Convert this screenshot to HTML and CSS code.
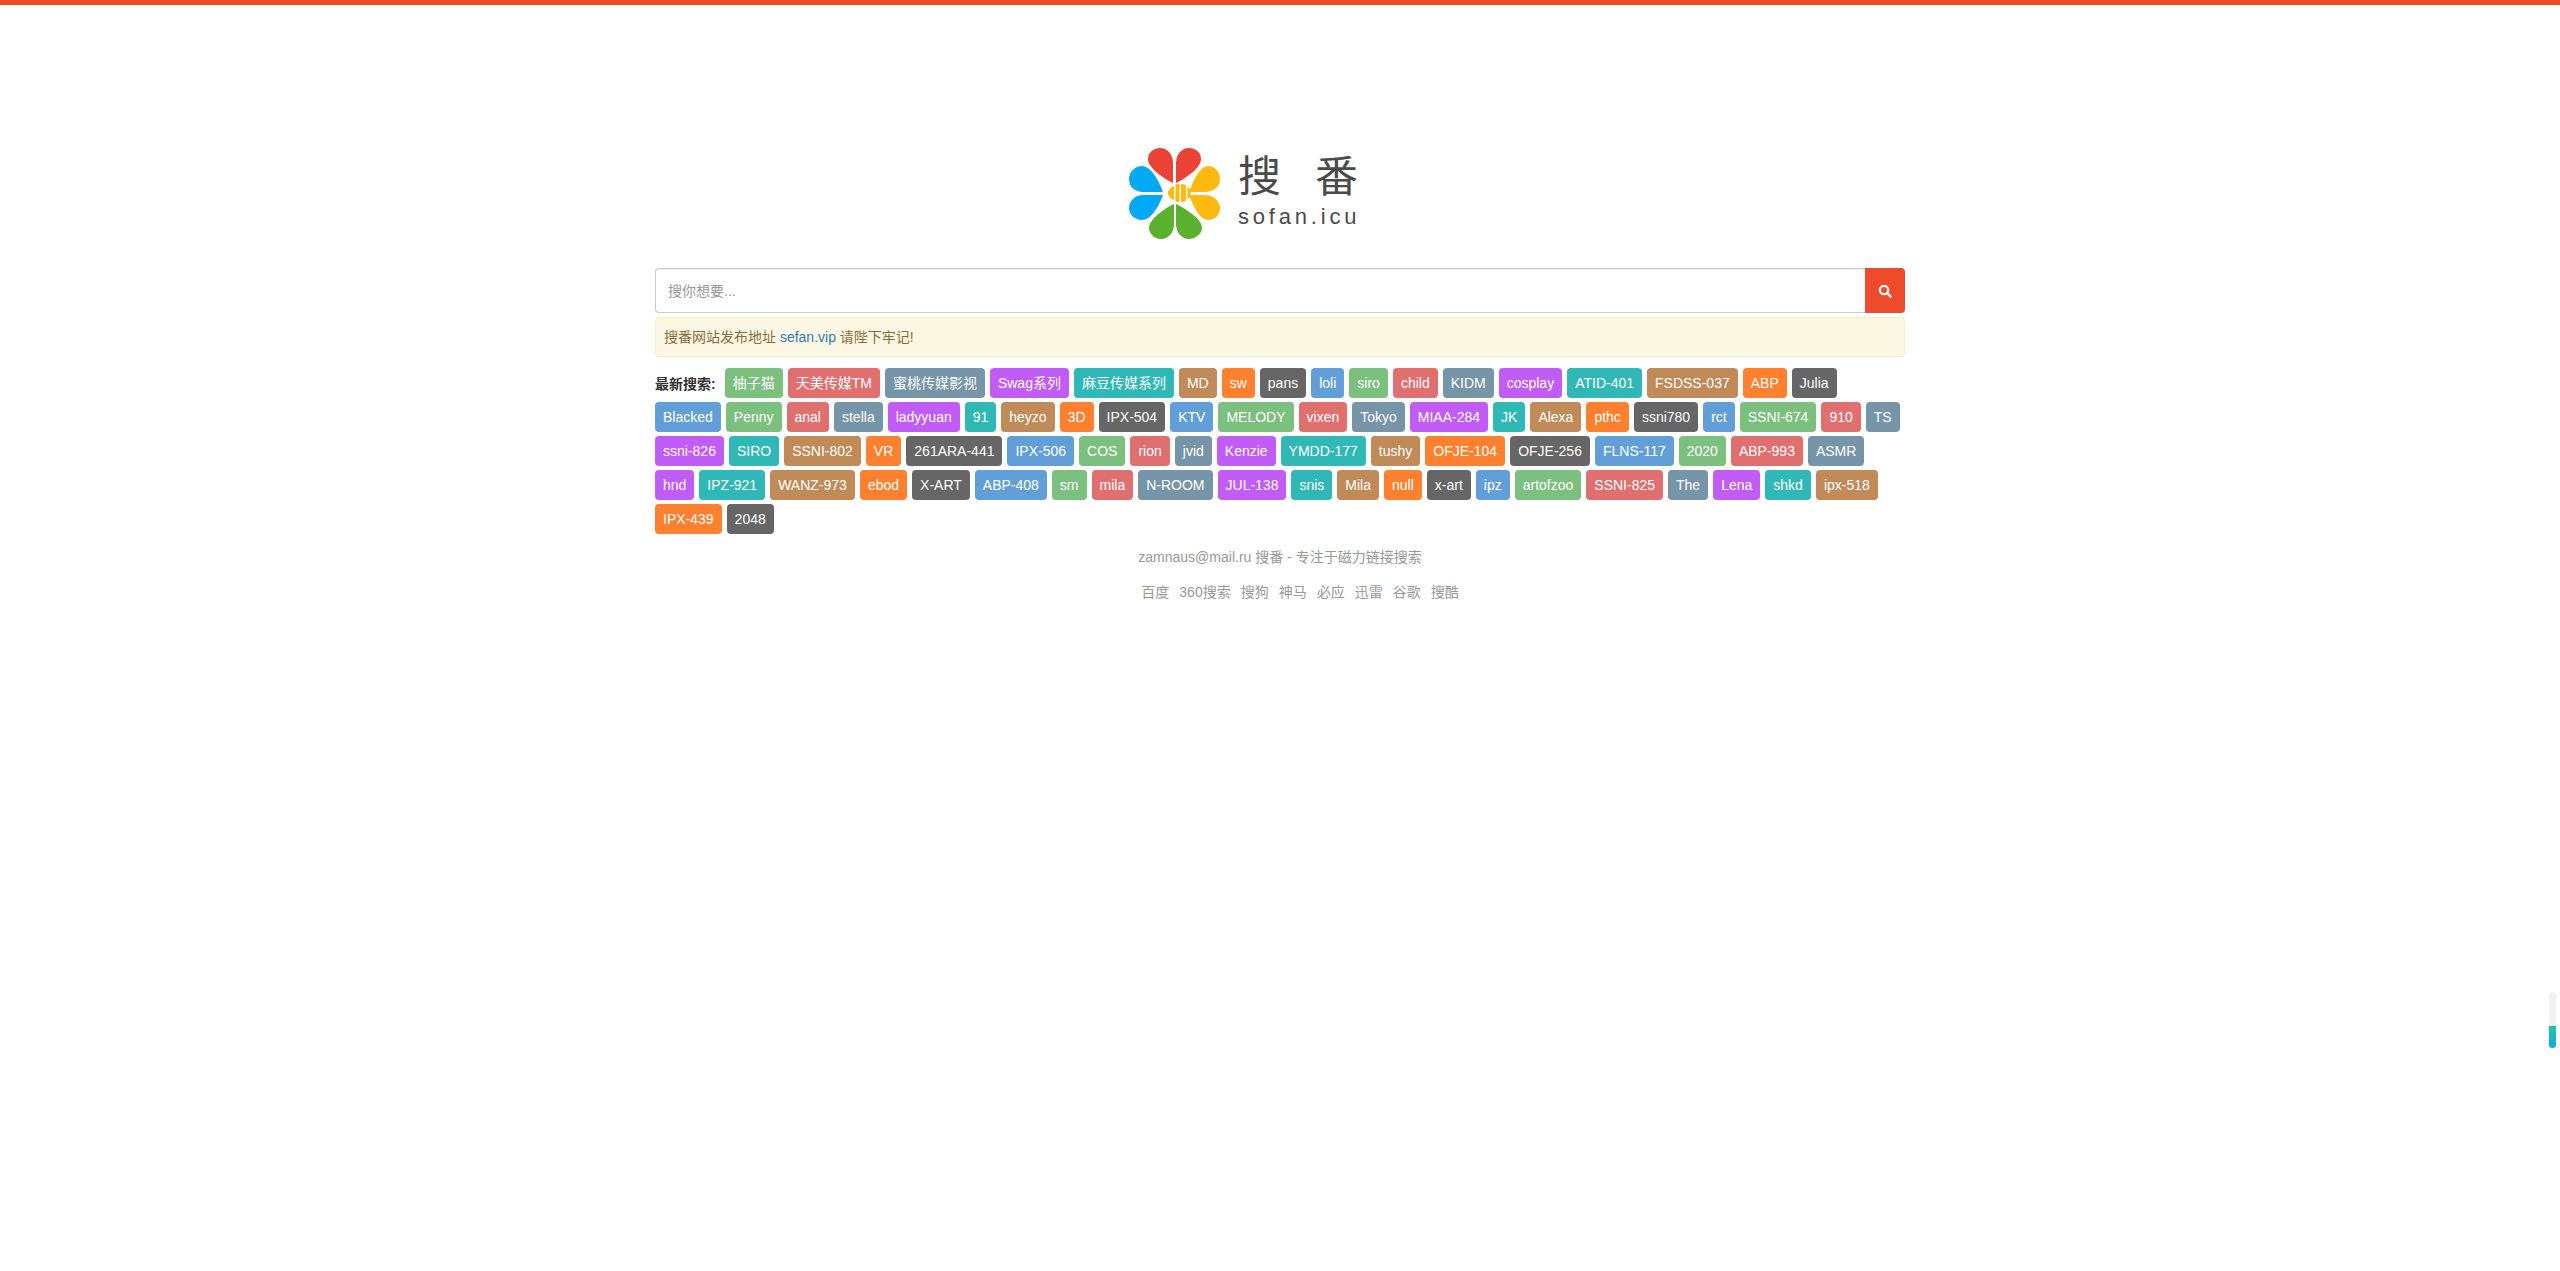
FILE: index.html
```html
<!DOCTYPE html>
<html lang="zh-CN">
<head>
  <meta charset="UTF-8">
  <title>搜番</title>
  <link rel="stylesheet" href="styles.css">
</head>
<body>
  <div class="top-bar"></div>
  <div class="container">
    <div class="logo">
      <svg class="logo-mark" width="92" height="92" viewBox="0 0 92 92">
        <path fill="#ea4335" d="M44 35 C34 30 19 20 19 11 C19 4 25 0 31 0 C39 0 44 7 44 15 Z"/>
        <path fill="#ea4335" d="M47 35 L47 15 C47 7 52 0 60 0 C66 0 72 4 72 11 C72 20 57 30 47 35 Z"/>
        <path fill="#03a9f4" d="M34 44 L14 44 C6 44 0 39 0 31 C0 24 6 18 13 18 C22 18 30 33 34 44 Z"/>
        <path fill="#03a9f4" d="M34 47 L14 47 C6 47 0 53 0 60 C0 67 6 72 13 72 C22 72 30 58 34 47 Z"/>
        <path fill="#ffb90f" d="M60 44 C64 33 71 18 79 18 C86 18 91 24 91 31 C91 39 84 44 76 44 Z"/>
        <path fill="#ffb90f" d="M60 47 L76 47 C84 47 91 53 91 60 C91 67 86 72 79 72 C71 72 64 58 60 47 Z"/>
        <path fill="#5bb12f" d="M45 56 L45 76 C45 84 40 91 32 91 C26 91 20 86 20 80 C20 71 35 61 45 56 Z"/>
        <path fill="#5bb12f" d="M47 56 L47 76 C47 84 52 91 60 91 C66 91 73 86 73 80 C73 71 57 61 47 56 Z"/>
        <path fill="#ffb90f" d="M39 45 C39 42 42 39 45 38 L45 52 C42 51 39 48 39 45 Z"/>
        <path fill="#ffb90f" d="M46.500 36.500 C48 36 49 36 50.500 36 L50.500 54 C49 54 48 54 46.500 53.500 Z"/>
        <path fill="#ffb90f" d="M52 36 C54 36 55.500 36.500 57 37.500 L57 52.500 C55.500 53.500 54 54 52 54 Z"/>
        <path fill="#ffb90f" d="M58.500 38.500 C63 42 63 48 58.500 51.500 Z"/>
      </svg>
      <div class="logo-text">
        <div class="logo-cn"><span>搜</span><span>番</span></div>
        <div class="logo-en">sofan.icu</div>
      </div>
    </div>

    <form class="search-form">
      <input class="search-input" type="text" placeholder="搜你想要...">
      <button class="search-btn" type="button">
        <svg width="14" height="14" viewBox="0 0 14 14">
          <circle cx="6" cy="6" r="4.2" fill="none" stroke="#fff" stroke-width="2.2"/>
          <path d="M9 9 L12.6 12.6" stroke="#fff" stroke-width="2.4" stroke-linecap="round"/>
        </svg>
      </button>
    </form>

    <div class="notice">搜番网站发布地址 <a href="#">sefan.vip</a> 请陛下牢记!</div>

    <div class="tags">
      <strong class="tags-label">最新搜索:</strong>
      <a href="#">柚子猫</a><a href="#">天美传媒TM</a><a href="#">蜜桃传媒影视</a><a href="#">Swag系列</a><a href="#">麻豆传媒系列</a><a href="#">MD</a><a href="#">sw</a><a href="#">pans</a><a href="#">loli</a><a href="#">siro</a><a href="#">child</a><a href="#">KIDM</a><a href="#">cosplay</a><a href="#">ATID-401</a><a href="#">FSDSS-037</a><a href="#">ABP</a><a href="#">Julia</a>
      <a href="#">Blacked</a><a href="#">Penny</a><a href="#">anal</a><a href="#">stella</a><a href="#">ladyyuan</a><a href="#">91</a><a href="#">heyzo</a><a href="#">3D</a><a href="#">IPX-504</a><a href="#">KTV</a><a href="#">MELODY</a><a href="#">vixen</a><a href="#">Tokyo</a><a href="#">MIAA-284</a><a href="#">JK</a><a href="#">Alexa</a><a href="#">pthc</a><a href="#">ssni780</a><a href="#">rct</a><a href="#">SSNI-674</a><a href="#">910</a><a href="#">TS</a>
      <a href="#">ssni-826</a><a href="#">SIRO</a><a href="#">SSNI-802</a><a href="#">VR</a><a href="#">261ARA-441</a><a href="#">IPX-506</a><a href="#">COS</a><a href="#">rion</a><a href="#">jvid</a><a href="#">Kenzie</a><a href="#">YMDD-177</a><a href="#">tushy</a><a href="#">OFJE-104</a><a href="#">OFJE-256</a><a href="#">FLNS-117</a><a href="#">2020</a><a href="#">ABP-993</a><a href="#">ASMR</a>
      <a href="#">hnd</a><a href="#">IPZ-921</a><a href="#">WANZ-973</a><a href="#">ebod</a><a href="#">X-ART</a><a href="#">ABP-408</a><a href="#">sm</a><a href="#">mila</a><a href="#">N-ROOM</a><a href="#">JUL-138</a><a href="#">snis</a><a href="#">Mila</a><a href="#">null</a><a href="#">x-art</a><a href="#">ipz</a><a href="#">artofzoo</a><a href="#">SSNI-825</a><a href="#">The</a><a href="#">Lena</a><a href="#">shkd</a><a href="#">ipx-518</a>
      <a href="#">IPX-439</a><a href="#">2048</a>
    </div>

    <footer class="footer">
      <p>zamnaus@mail.ru 搜番 - 专注于磁力链接搜索</p>
      <p class="footer-links">
        <a href="#">百度</a><a href="#">360搜索</a><a href="#">搜狗</a><a href="#">神马</a><a href="#">必应</a><a href="#">迅雷</a><a href="#">谷歌</a><a href="#">搜酷</a>
      </p>
    </footer>
  </div>

  <div class="scroll-meter"><div class="scroll-meter-fill"></div></div>
</body>
</html>
```

FILE: styles.css
```css
body {
  margin: 0;
  padding: 0;
  background: #fff;
  color: #333;
  font-family: "Liberation Sans", "Noto Sans CJK SC", sans-serif;
  font-size: 14px;
}

a {
  text-decoration: none;
}

.top-bar {
  height: 5px;
  background: #ee4b2b;
}

.container {
  width: 1250px;
  margin: 0 auto;
}

.logo {
  width: 302px;
  margin: 0 auto;
  padding-top: 143px;
  display: flex;
  align-items: flex-start;
  gap: 17px;
}

.logo-text {
  color: #4a4a4a;
}

.logo-cn {
  display: flex;
  gap: 34px;
  font-size: 43px;
  line-height: 52px;
  font-weight: 400;
  margin-top: 3px;
}

.logo-en {
  font-size: 22px;
  line-height: 26px;
  letter-spacing: 3.8px;
  margin-top: 1px;
}

.search-form {
  display: flex;
  height: 45px;
  margin-top: 28px;
}

.search-input {
  flex: 1;
  height: 45px;
  box-sizing: border-box;
  padding: 0 12px;
  border: 1px solid #ccc;
  border-right: none;
  border-radius: 4px 0 0 4px;
  box-shadow: inset 0 1px 1px rgba(0, 0, 0, .075);
  font-family: inherit;
  font-size: 14px;
  outline: none;
}

.search-input::placeholder {
  color: #999;
}

.search-btn {
  width: 40px;
  padding: 0;
  border: none;
  border-radius: 0 4px 4px 0;
  background: #ee4b2b;
  display: flex;
  align-items: center;
  justify-content: center;
}

.notice {
  margin-top: 4px;
  padding: 0 8px;
  height: 38px;
  line-height: 38px;
  background: #fcf8e3;
  border: 1px solid #faebcc;
  border-radius: 4px;
  color: #8a6d3b;
  font-size: 14px;
}

.notice a {
  color: #337ab7;
}

.tags {
  display: flex;
  flex-wrap: wrap;
  align-items: center;
  gap: 4px 5px;
  margin-top: 11px;
}

.tags-label {
  font-size: 14px;
  margin-right: 4px;
}

.tags a {
  display: block;
  height: 30px;
  line-height: 30px;
  padding: 0 8px;
  border-radius: 4px;
  color: #fff;
  font-size: 14px;
}

/* colours go round in nines, the label is child 1 */
.tags a:nth-child(9n+2) { background: #7cc07f; }
.tags a:nth-child(9n+3) { background: #e06f70; }
.tags a:nth-child(9n+4) { background: #7795a8; }
.tags a:nth-child(9n+5) { background: #c15cf7; }
.tags a:nth-child(9n+6) { background: #2fb8b5; }
.tags a:nth-child(9n+7) { background: #c08a59; }
.tags a:nth-child(9n+8) { background: #ff802f; }
.tags a:nth-child(9n+9) { background: #666; }
.tags a:nth-child(9n+10) { background: #629fd8; }

.footer {
  margin-top: 13px;
  text-align: center;
  color: #999;
  font-size: 14px;
}

.footer p {
  margin: 0;
  line-height: 20px;
}

.footer .footer-links {
  margin-top: 15px;
  padding-left: 40px;
}

.footer-links a {
  color: #999;
  margin: 0 5px;
}

.scroll-meter {
  position: fixed;
  right: 4px;
  top: 992px;
  width: 7px;
  height: 56px;
  background: #f1f1f1;
  border-radius: 4px;
  overflow: hidden;
}

.scroll-meter-fill {
  margin-top: 34px;
  height: 22px;
  background: linear-gradient(#1cc7a5, #13a8e8);
}
```
